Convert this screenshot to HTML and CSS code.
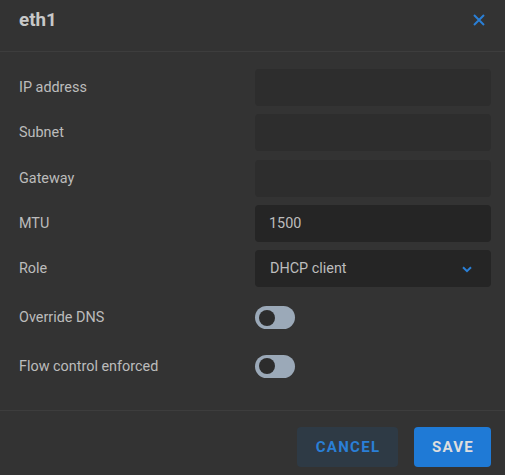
FILE: index.html
```
<!DOCTYPE html>
<html>
<head>
<meta charset="utf-8">
<link rel="stylesheet" href="styles.css">
</head>
<body>
<div class="dialog">
  <header class="head">
    <h1 class="title">eth1</h1>
    <button class="close" aria-label="Close">
      <svg width="12" height="12" viewBox="0 0 12 12"><path d="M1 1L11 11M11 1L1 11" stroke="#2a7fd6" stroke-width="2" fill="none"/></svg>
    </button>
  </header>
  <div class="body">
    <div class="row"><span class="label">IP address</span><div class="field empty"></div></div>
    <div class="row"><span class="label">Subnet</span><div class="field empty"></div></div>
    <div class="row"><span class="label">Gateway</span><div class="field empty"></div></div>
    <div class="row"><span class="label">MTU</span><div class="field filled">1500</div></div>
    <div class="row"><span class="label">Role</span><div class="field filled select"><span>DHCP client</span>
      <svg class="chev" width="10" height="7" viewBox="0 0 10 7"><path d="M1 1.2L5 5.2L9 1.2" stroke="#2a7fd6" stroke-width="2" fill="none"/></svg></div></div>
    <div class="row trow first"><span class="label">Override DNS</span><div class="toggle"><span class="knob"></span></div></div>
    <div class="row trow"><span class="label">Flow control enforced</span><div class="toggle"><span class="knob"></span></div></div>
  </div>
  <footer class="foot">
    <button class="btn cancel">CANCEL</button>
    <button class="btn save">SAVE</button>
  </footer>
</div>
</body>
</html>
```
FILE: styles.css
```
html, body {
  margin: 0;
  padding: 0;
  background: #333333;
  font-family: Roboto, "Liberation Sans", sans-serif;
}
.dialog {
  width: 505px;
  height: 475px;
  background: #333333;
  display: flex;
  flex-direction: column;
}
.head {
  height: 52px;
  box-sizing: border-box;
  border-bottom: 1px solid #3d3d3d;
  display: flex;
  align-items: flex-start;
  justify-content: space-between;
  padding: 0 19px 0 19px;
}
.title {
  margin: 0;
  padding-top: 10px;
  font-size: 18.8px;
  line-height: 21px;
  font-weight: 700;
  color: #c8c8c8;
}
.close {
  background: none;
  border: 0;
  padding: 0;
  margin-top: 14px;
  margin-right: 1px;
  width: 12px;
  height: 12px;
  display: flex;
}
.body {
  padding: 17px 14px 24px 19px;
  display: flex;
  flex-direction: column;
  gap: 8.25px;
}
.row {
  display: grid;
  grid-template-columns: 236px 236px;
  align-items: center;
  height: 37px;
}
.trow {
  height: 40px;
}
.first {
  margin-top: 2.5px;
}
.label {
  font-size: 14.4px;
  color: #bcbcbc;
}
.field {
  height: 37px;
  border-radius: 4px;
  box-sizing: border-box;
  padding: 0 14px;
  display: flex;
  align-items: center;
  font-size: 14.4px;
  color: #bdbdbd;
}
.empty {
  background: #2d2d2d;
}
.filled {
  background: #252525;
}
.select {
  justify-content: space-between;
  padding-left: 15px;
  padding-right: 19px;
}
.chev {
  margin-top: 1px;
}
.toggle {
  width: 40px;
  height: 23px;
  border-radius: 12px;
  background: #9ba9b8;
  display: flex;
  align-items: center;
  padding-left: 4px;
  box-sizing: border-box;
}
.knob {
  width: 16px;
  height: 16px;
  border-radius: 50%;
  background: #2c2c2c;
}
.foot {
  border-top: 1px solid #3d3d3d;
  display: flex;
  justify-content: flex-end;
  gap: 16px;
  padding: 16px 14px 0 0;
}
.btn {
  height: 40px;
  border: 0;
  border-radius: 4px;
  font-family: Roboto, "Liberation Sans", sans-serif;
  font-size: 15px;
  font-weight: 700;
  letter-spacing: 1.3px;
  padding: 0 16px 0 17px;
}
.cancel {
  width: 101px;
  background: #2e3a45;
  color: #2a7fd6;
}
.save {
  width: 77px;
  background: #1f7ad6;
  color: #dedede;
}
```
